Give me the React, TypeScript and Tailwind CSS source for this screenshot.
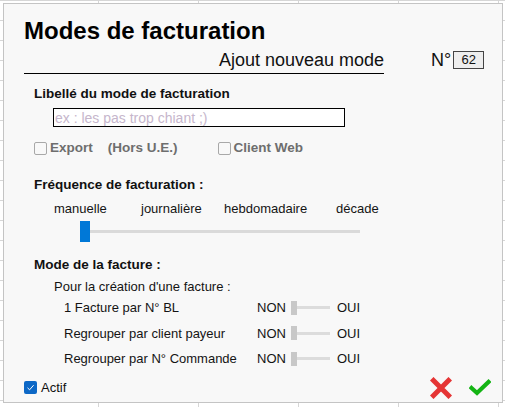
import React from "react";

const font = "font-['Liberation_Sans',Arial,sans-serif]";

function Toggle() {
  return (
    <div className="flex items-center w-[39px] h-[14px]">
      <div className="w-[6px] h-[14px] bg-[#c8c8c8]" />
      <div className="flex-1 h-[3px] bg-[#dcdcdc]" />
    </div>
  );
}

function ToggleRow({ label }: { label: string }) {
  return (
    <div className="flex items-center h-[25.5px] pl-[60px] text-[13px] text-[#141414]">
      <span className="w-[193px]">{label}</span>
      <span className="w-[34px]">NON</span>
      <Toggle />
      <span className="ml-[7px]">OUI</span>
    </div>
  );
}

function GreyCheck({ label }: { label: string }) {
  return (
    <div className="flex items-center gap-[3px]">
      <span className="w-[13px] h-[13px] rounded-[2px] border border-[#a8a8a8] bg-[#f8f8f8]" />
      <span>{label}</span>
    </div>
  );
}

export default function App() {
  return (
    <div
      className={`w-[505px] h-[407px] bg-white pl-[3px] pt-[3px] ${font} bg-[linear-gradient(to_right,#d6d6d6_1px,transparent_1px),linear-gradient(to_bottom,#d6d6d6_1px,transparent_1px)] bg-[size:100px_20px] bg-[position:-2px_0px]`}
    >
      <div className="w-[500px] h-[400px] border border-[#c4c4c4] bg-[#f8f8f8] flex flex-col">
        {/* title */}
        <h1 className="pl-[20px] pt-[12px] text-[24px] font-bold leading-[30px] text-black">
          Modes de facturation
        </h1>

        <div className="flex items-end pl-[20px] mt-[3px]">
          <div className="w-[360px] border-b border-black text-right text-[18px] leading-[22px] text-[#111] pb-[2px]">
            Ajout nouveau mode
          </div>
          <div className="flex items-center ml-[47px] mb-[4px]">
            <span className="text-[18px] leading-[20px] text-[#111]">N°</span>
            <span className="ml-[2px] w-[31px] h-[18px] border border-[#444] bg-[#eeeeee] text-[13px] leading-[16px] text-center text-[#111]">
              62
            </span>
          </div>
        </div>

        {/* libellé */}
        <div className="pl-[30px] mt-[12px]">
          <div className="text-[13.5px] font-bold leading-[16px] text-[#111]">
            Libellé du mode de facturation
          </div>
          <div className="ml-[19px] mt-[6px] w-[292px] h-[19px] border border-black bg-white flex items-center px-[1px]">
            <span className="text-[14px] text-[#c6b6cc] leading-[16px]">ex : les pas trop chiant ;)</span>
          </div>
          <div className="flex items-center mt-[13px] text-[13.5px] font-bold text-[#6e6e6e] leading-[16px]">
            <GreyCheck label="Export" />
            <span className="ml-[15px]">(Hors U.E.)</span>
            <div className="ml-[40px]">
              <GreyCheck label="Client Web" />
            </div>
          </div>
        </div>

        {/* fréquence */}
        <div className="pl-[30px] mt-[21px]">
          <div className="text-[13.5px] font-bold leading-[16px] text-[#111]">
            Fréquence de facturation :
          </div>
          <div className="flex pl-[20px] mt-[8px] text-[13px] leading-[16px] text-[#141414]">
            <span className="w-[87px]">manuelle</span>
            <span className="w-[83px]">journalière</span>
            <span className="w-[112px]">hebdomadaire</span>
            <span>décade</span>
          </div>
          <div className="flex items-center ml-[46px] mt-[4px] h-[21px]">
            <div className="w-[10px] h-[21px] bg-[#0078d7]" />
            <div className="w-[270px] h-[3px] bg-[#dadada]" />
          </div>
        </div>

        {/* mode */}
        <div className="pl-[30px] mt-[15px]">
          <div className="text-[13.5px] font-bold leading-[16px] text-[#111]">
            Mode de la facture :
          </div>
          <div className="pl-[20px] mt-[6px] text-[13px] leading-[16px] text-[#141414]">
            Pour la création d'une facture :
          </div>
        </div>
        <div className="mt-[0px]">
          <ToggleRow label="1 Facture par N° BL" />
          <ToggleRow label="Regrouper par client payeur" />
          <ToggleRow label="Regrouper par N° Commande" />
        </div>

        {/* footer */}
        <div className="flex items-center pl-[20px] pr-[11px] mt-[5px]">
          <div className="flex items-center gap-[4px] text-[13px] text-[#111]">
            <span className="w-[13px] h-[13px] rounded-[2px] bg-[#0d68c6] flex items-center justify-center">
              <svg width="9" height="9" viewBox="0 0 9 9">
                <path d="M1.5 4.8 L3.6 6.8 L7.6 2.2" stroke="#fff" strokeWidth="1" fill="none" />
              </svg>
            </span>
            <span>Actif</span>
          </div>
          <div className="ml-auto flex items-center gap-[17px]">
            <svg width="22" height="22" viewBox="0 0 22 22">
              <path d="M3.5 3.5 L18.5 18.5 M18.5 3.5 L3.5 18.5" stroke="#e53535" strokeWidth="5" strokeLinecap="square" />
            </svg>
            <svg width="22" height="18" viewBox="0 0 22 18">
              <path d="M2.5 9 L8 14 L19.5 3" stroke="#14b414" strokeWidth="4.2" fill="none" strokeLinecap="square" />
            </svg>
          </div>
        </div>
      </div>
    </div>
  );
}
